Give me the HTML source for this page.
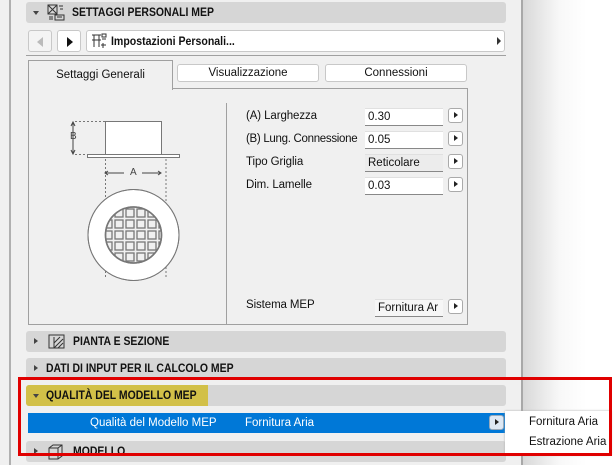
<!DOCTYPE html>
<html><head><meta charset="utf-8"><style>
*{box-sizing:border-box;margin:0;padding:0}
body{width:614px;height:465px;overflow:hidden;background:#fff;font-family:"Liberation Sans",sans-serif;font-size:11.5px;color:#111;position:relative}
.a{position:absolute}
.hdr{position:absolute;left:26px;width:480px;height:21px;background:#d6d6d6;border-radius:3px;font-weight:bold;font-size:12px;line-height:21px}
.hdr span.t{position:absolute;display:inline-block;transform:scaleX(.87);transform-origin:0 50%;white-space:nowrap}
.btn{position:absolute;background:#fff;border:1px solid #c8c8c8;border-radius:3px}
.inp{position:absolute;background:#fff;border-bottom:1px solid #888;border-top:1px solid #e0e0e0;height:18px;line-height:17px;padding-left:3px}
.ab{position:absolute;width:15px;height:15px;background:#fff;border:1px solid #aaa;border-radius:3px}
.ab:after{content:"";position:absolute;left:5px;top:3px;border-left:4px solid #222;border-top:3.5px solid transparent;border-bottom:3.5px solid transparent}
.lbl{position:absolute;left:246px;white-space:nowrap;letter-spacing:-0.1px}
.tri{position:absolute;border-left:4px solid #444;border-top:3.5px solid transparent;border-bottom:3.5px solid transparent}
.trid{position:absolute;border-top:4px solid #444;border-left:3.5px solid transparent;border-right:3.5px solid transparent}
</style></head><body>
<div class="a" style="left:0;top:0;width:9px;height:465px;background:#f0f0f0"></div>
<div class="a" style="left:9px;top:0;width:2px;height:465px;background:#b0b0b0"></div>
<div class="a" style="left:11px;top:0;width:511px;height:465px;background:#f0f0f0"></div>
<div class="a" style="left:521px;top:0;width:2px;height:465px;background:#a8a8a8"></div>
<div class="a" style="left:523px;top:0;width:91px;height:465px;background:linear-gradient(to right,#d8d8d8,#f8f8f8 40%,#fff 70%)"></div>

<div class="hdr" style="top:2px"><span class="trid" style="left:7px;top:9px"></span>
<svg class="a" style="left:21px;top:2px" width="18" height="17" viewBox="0 0 18 17" fill="none" stroke="#333"><rect x="1" y="1" width="9" height="9"/><path d="M1 1L10 10M10 1L1 10M12 2h4M13 5h3M8 11h9v5H8zM10 13h5M2 13h4M2 15h4"/></svg>
<span class="t" style="left:46px">SETTAGGI PERSONALI MEP</span></div>

<div class="btn" style="left:28px;top:30px;width:24px;height:22px;background:#f4f4f4"><span class="a" style="left:8px;top:6px;border-right:6px solid #bbb;border-top:5px solid transparent;border-bottom:5px solid transparent"></span></div>
<div class="btn" style="left:57px;top:30px;width:24px;height:22px"><span class="a" style="left:9px;top:6px;border-left:6px solid #111;border-top:5px solid transparent;border-bottom:5px solid transparent"></span></div>
<div class="btn" style="left:86px;top:30px;width:419px;height:22px">
<svg class="a" style="left:4px;top:2px" width="16" height="17" viewBox="0 0 16 17" fill="none" stroke="#333"><path d="M1 2h9M3 2v12M8 2v12M1 7h9M11 1h4v3h-4zM11 6h4M12 10v5M10 12h5"/></svg>
<span class="a" style="left:24px;top:3px;font-weight:bold;font-size:12px;display:inline-block;transform:scaleX(.88);transform-origin:0 50%;white-space:nowrap">Impostazioni Personali...</span>
<span class="a" style="left:410px;top:6px;border-left:4px solid #333;border-top:4px solid transparent;border-bottom:4px solid transparent"></span></div>
<div class="a" style="left:26px;top:55px;width:480px;height:1px;background:#a0a0a0"></div>

<div class="a" style="left:28px;top:88px;width:440px;height:237px;border:1px solid #a0a0a0"></div>
<div class="a" style="left:28px;top:60px;width:145px;height:30px;border:1px solid #a0a0a0;border-bottom:none;background:#f0f0f0;text-align:center;line-height:28px">Settaggi Generali</div>
<div class="btn" style="left:177px;top:64px;width:142px;height:18px;text-align:center;line-height:16px">Visualizzazione</div>
<div class="btn" style="left:325px;top:64px;width:142px;height:18px;text-align:center;line-height:16px">Connessioni</div>
<div class="a" style="left:226px;top:103px;width:1px;height:222px;background:#a0a0a0"></div>

<svg class="a" style="left:60px;top:110px" width="150" height="205" viewBox="60 110 150 205" fill="none" stroke="#777">
<rect x="105.5" y="121.5" width="56" height="33" fill="#fff"/>
<rect x="87.5" y="154.5" width="92" height="3" fill="#fff"/>
<path d="M75 121.5h30M75 154.5h30M166 159v120M105.5 159v120" stroke-dasharray="2 2"/>
<path d="M73 123v30M106 173h18M142 173h18" stroke="#444"/>
<path d="M71 126l2-4 2 4M71 150l2 4 2-4M108 171l-3 2 3 2M158 171l3 2-3 2" stroke="#444"/>
<circle cx="133.5" cy="235" r="45.5" fill="#fff"/>
<clipPath id="c"><circle cx="133.5" cy="235" r="28"/></clipPath>
<circle cx="133.5" cy="235" r="28" fill="#f0f0f0" stroke-width="1.5"/>
<g clip-path="url(#c)" stroke-width="1.3">
<g id="r"><rect x="104" y="209" width="8" height="8"/><rect x="115" y="209" width="8" height="8"/><rect x="126" y="209" width="8" height="8"/><rect x="137" y="209" width="8" height="8"/><rect x="148" y="209" width="8" height="8"/><rect x="159" y="209" width="8" height="8"/></g>
<use href="#r" y="11"/><use href="#r" y="22"/><use href="#r" y="33"/><use href="#r" y="44"/>
</g>
<circle cx="133.5" cy="235" r="28" stroke-width="1.5"/>
<circle cx="133.5" cy="235" r="45.5"/>
</svg>
<span class="a" style="left:70px;top:131px;font-size:10px;color:#444">B</span>
<span class="a" style="left:130px;top:167px;font-size:10px;color:#444">A</span>

<span class="lbl" style="top:110px">(A) Larghezza</span>
<span class="lbl" style="top:133px;letter-spacing:-0.3px">(B) Lung. Connessione</span>
<span class="lbl" style="top:156px">Tipo Griglia</span>
<span class="lbl" style="top:179px">Dim. Lamelle</span>
<span class="lbl" style="top:299px">Sistema MEP</span>
<div class="inp" style="left:365px;top:108px;width:78px">0.30</div>
<div class="inp" style="left:365px;top:131px;width:78px">0.05</div>
<div class="inp" style="left:365px;top:154px;width:78px;background:#ececec">Reticolare</div>
<div class="inp" style="left:365px;top:177px;width:78px">0.03</div>
<div class="inp" style="left:375px;top:299px;width:68px;background:#f6f6f6;overflow:hidden;white-space:nowrap">Fornitura Ar</div>
<div class="ab" style="left:448px;top:108px"></div>
<div class="ab" style="left:448px;top:131px"></div>
<div class="ab" style="left:448px;top:154px"></div>
<div class="ab" style="left:448px;top:177px"></div>
<div class="ab" style="left:448px;top:299px"></div>

<div class="hdr" style="top:331px"><span class="tri" style="left:8px;top:7px"></span>
<svg class="a" style="left:22px;top:3px" width="18" height="15" viewBox="0 0 18 15" fill="none" stroke="#333"><rect x="1" y="1" width="15" height="13"/><path d="M6 14L15 5M10 14l5-5M6 9l6-6M6 3v11" stroke-width="1"/></svg>
<span class="t" style="left:47px">PIANTA E SEZIONE</span></div>
<div class="hdr" style="top:358px"><span class="tri" style="left:8px;top:7px"></span><span class="t" style="left:20px">DATI DI INPUT PER IL CALCOLO MEP</span></div>
<div class="hdr" style="top:385px"><div class="a" style="left:0;top:0;width:182px;height:21px;background:#d2c048;border-radius:3px 0 0 3px"></div><span class="trid" style="left:7px;top:9px"></span><span class="t" style="left:20px">QUALITÀ DEL MODELLO MEP</span></div>
<div class="a" style="left:28px;top:413px;width:478px;height:20px;background:#0078d7;color:#fff;line-height:20px"><span class="a" style="left:62px">Qualità del Modello MEP</span><span class="a" style="left:217px">Fornitura Aria</span>
<div class="ab" style="left:461px;top:2px;background:#dde8f4;border-color:#9ab"></div></div>
<div class="hdr" style="top:441px"><span class="tri" style="left:8px;top:7px"></span>
<svg class="a" style="left:22px;top:3px" width="15" height="16" viewBox="0 0 15 16" fill="none" stroke="#333"><path d="M1 4l4-3h9v11l-4 3H1zM1 4h9v11M10 4l4-3"/></svg>
<span class="t" style="left:47px">MODELLO</span></div>

<div class="a" style="left:505px;top:411px;width:106px;height:44px;background:#fff;box-shadow:0 0 2px #aaa"><span class="a" style="left:24px;top:5px">Fornitura Aria</span><span class="a" style="left:24px;top:25px">Estrazione Aria</span></div>
<div class="a" style="left:18px;top:377px;width:594px;height:79px;border:3px solid #e00000"></div>
</body></html>
